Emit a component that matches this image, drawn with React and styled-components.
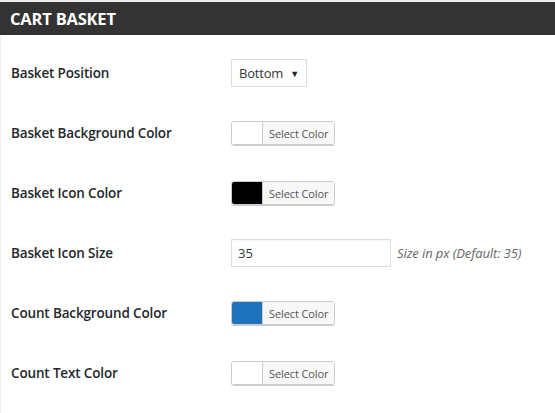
import React from 'react';
import styled, { createGlobalStyle } from 'styled-components';

const GlobalStyle = createGlobalStyle`
  html, body {
    margin: 0;
    padding: 0;
    background: #f1f1f1;
  }
  body {
    font-family: "Open Sans", "Noto Sans", sans-serif;
    color: #23282d;
  }
`;

const Panel = styled.div`
  width: 555px;
  height: 413px;
  padding-top: 2px;
  box-sizing: border-box;
  overflow: hidden;
`;

const Header = styled.h2`
  margin: 0;
  height: 33px;
  background: #333333;
  color: #fff;
  font-size: 16.5px;
  font-weight: 700;
  line-height: 33px;
  padding-left: 10px;
  letter-spacing: -0.2px;
`;

const Body = styled.div`
  margin-left: 1px;
  background: #fff;
  height: 100%;
  padding-top: 8px;
`;

const Row = styled.div`
  display: grid;
  grid-template-columns: 220px 1fr;
  align-items: center;
  height: 60px;
  padding-left: 10px;
`;

const Label = styled.label`
  font-size: 13.5px;
  font-weight: 600;
  color: #23282d;
  letter-spacing: -0.15px;
`;

const Field = styled.div`
  display: flex;
  align-items: center;
  gap: 6px;
`;

const Select = styled.div`
  display: flex;
  align-items: center;
  height: 28px;
  box-sizing: border-box;
  padding: 0 7px;
  border: 1px solid #ddd;
  background: #fff;
  font-size: 13px;
  color: #32373c;
  gap: 7px;
  letter-spacing: -0.2px;
`;

const Caret = styled.span`
  font-size: 9px;
  color: #222;
`;

const Picker = styled.div`
  display: flex;
  height: 24px;
  box-sizing: border-box;
  border: 1px solid #ccc;
  border-radius: 3px;
  box-shadow: 0 1px 0 #ccc;
  overflow: hidden;
`;

const Swatch = styled.span`
  width: 30px;
  background: ${({ $color }) => $color};
  border-right: 1px solid #ccc;
`;

const PickButton = styled.span`
  display: flex;
  align-items: center;
  padding: 0 6px;
  background: #f7f7f7;
  font-size: 11px;
  color: #555;
  letter-spacing: -0.1px;
`;

const TextInput = styled.div`
  width: 160px;
  height: 28px;
  box-sizing: border-box;
  border: 1px solid #ddd;
  padding: 0 6px;
  display: flex;
  align-items: center;
  font-size: 13px;
  color: #32373c;
  box-shadow: inset 0 1px 2px rgba(0, 0, 0, 0.04);
`;

const Hint = styled.span`
  font-size: 13px;
  font-style: italic;
  color: #666;
  letter-spacing: -0.1px;
`;

const ColorPicker = ({ color }) => (
  <Picker>
    <Swatch $color={color} />
    <PickButton>Select Color</PickButton>
  </Picker>
);

const App = () => (
  <>
    <GlobalStyle />
    <Panel>
      <Header>CART BASKET</Header>
      <Body>
        <Row>
          <Label>Basket Position</Label>
          <Field>
            <Select>
              Bottom <Caret>▼</Caret>
            </Select>
          </Field>
        </Row>
        <Row>
          <Label>Basket Background Color</Label>
          <Field>
            <ColorPicker color="#ffffff" />
          </Field>
        </Row>
        <Row>
          <Label>Basket Icon Color</Label>
          <Field>
            <ColorPicker color="#000000" />
          </Field>
        </Row>
        <Row>
          <Label>Basket Icon Size</Label>
          <Field>
            <TextInput>35</TextInput>
            <Hint>Size in px (Default: 35)</Hint>
          </Field>
        </Row>
        <Row>
          <Label>Count Background Color</Label>
          <Field>
            <ColorPicker color="#1e73be" />
          </Field>
        </Row>
        <Row>
          <Label>Count Text Color</Label>
          <Field>
            <ColorPicker color="#ffffff" />
          </Field>
        </Row>
      </Body>
    </Panel>
  </>
);

export default App;
